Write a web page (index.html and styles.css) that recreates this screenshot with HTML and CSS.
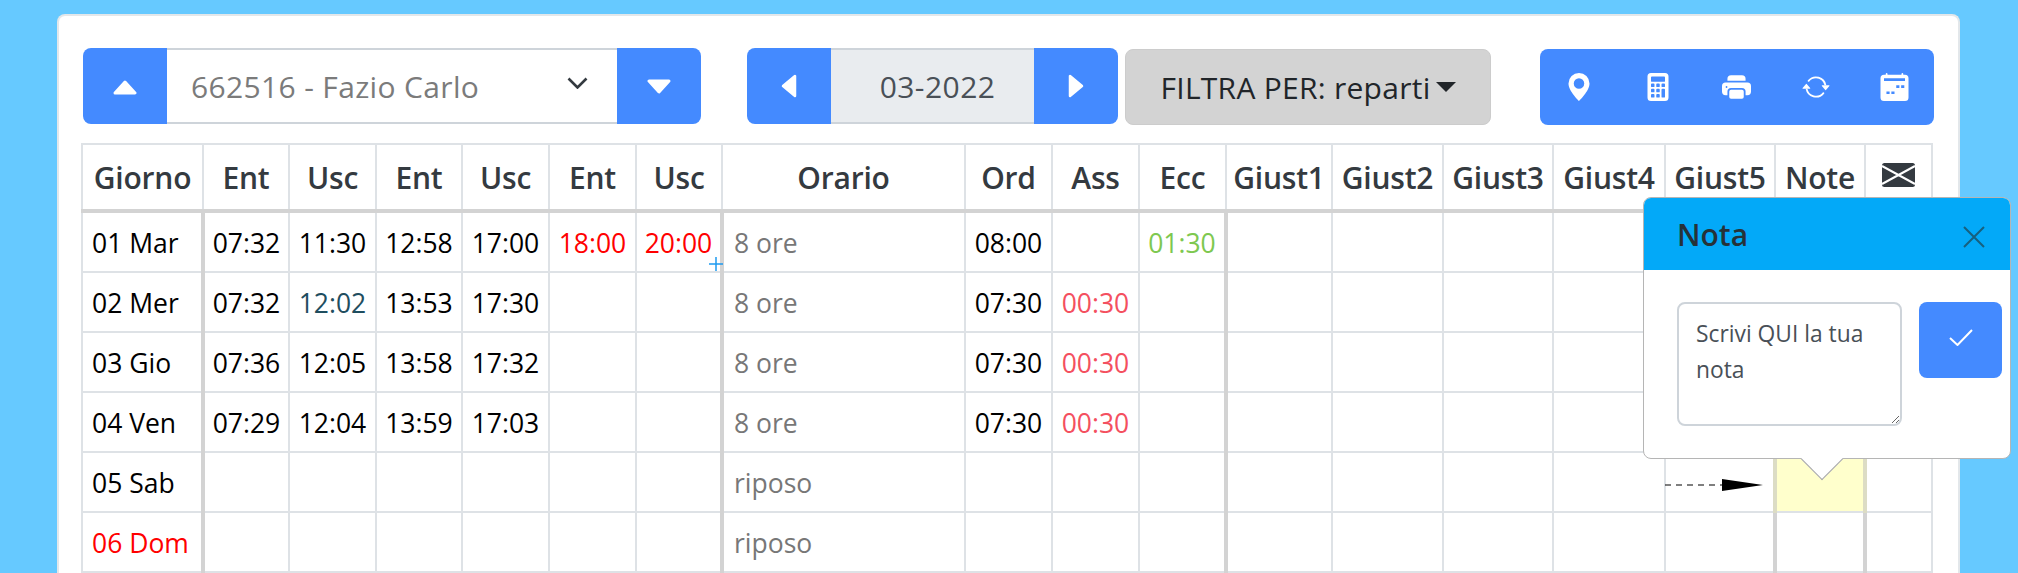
FILE: index.html
```html
<!DOCTYPE html>
<html lang="it">
<head>
<meta charset="utf-8">
<title>Cartellino</title>
<link rel="stylesheet" href="styles.css">
</head>
<body>
<div class="page">
  <main class="card">
    <div class="toolbar">
      <div class="group emp">
        <button class="btn side"><svg class="tri-h tri-up" viewBox="0 0 24 15"><path d="M12 2 22 13H2Z" fill="#fff" stroke="#fff" stroke-width="3" stroke-linejoin="round"/></svg></button>
        <div class="select"><span>662516 - Fazio Carlo</span><svg class="chev" viewBox="0 0 21 12"><path d="M1.5 1.5 10.5 10.5 19.5 1.5" fill="none" stroke="#343a40" stroke-width="2.6"/></svg></div>
        <button class="btn side"><svg class="tri-h" viewBox="0 0 24 15"><path d="M2 2H22L12 13Z" fill="#fff" stroke="#fff" stroke-width="3" stroke-linejoin="round"/></svg></button>
      </div>
      <div class="group month">
        <button class="btn side"><svg class="tri-v" viewBox="0 0 16 24"><path d="M14 2V22L2 12Z" fill="#fff" stroke="#fff" stroke-width="2.5" stroke-linejoin="round"/></svg></button>
        <div class="period">03-2022</div>
        <button class="btn side"><svg class="tri-v" viewBox="0 0 16 24"><path d="M2 2V22L14 12Z" fill="#fff" stroke="#fff" stroke-width="2.5" stroke-linejoin="round"/></svg></button>
      </div>
      <button class="filter">FILTRA PER: reparti<span class="caret"></span></button>
      <div class="tools">
        <button class="tool"><svg class="i-pin" viewBox="2 0 12 16"><path fill="#fff" d="M8 16s6-5.686 6-10A6 6 0 0 0 2 6c0 4.314 6 10 6 10zm0-7a3 3 0 1 1 0-6 3 3 0 0 1 0 6z"/></svg></button>
        <button class="tool"><svg class="i-pin" viewBox="2 0 12 16"><path fill="#fff" d="M2 2a2 2 0 0 1 2-2h8a2 2 0 0 1 2 2v12a2 2 0 0 1-2 2H4a2 2 0 0 1-2-2V2zm2 .5v2a.5.5 0 0 0 .5.5h7a.5.5 0 0 0 .5-.5v-2a.5.5 0 0 0-.5-.5h-7a.5.5 0 0 0-.5.5zm0 4v1a.5.5 0 0 0 .5.5h1a.5.5 0 0 0 .5-.5v-1a.5.5 0 0 0-.5-.5h-1a.5.5 0 0 0-.5.5zM4.500 9a.5.5 0 0 0-.5.5v1a.5.5 0 0 0 .5.5h1a.5.5 0 0 0 .5-.5v-1a.5.5 0 0 0-.5-.5h-1zM4 12.500v1a.5.5 0 0 0 .5.5h1a.5.5 0 0 0 .5-.5v-1a.5.5 0 0 0-.5-.5h-1a.5.5 0 0 0-.5.5zM7.500 6a.5.5 0 0 0-.5.5v1a.5.5 0 0 0 .5.5h1a.5.5 0 0 0 .5-.5v-1a.5.5 0 0 0-.5-.5h-1zM7 9.500v1a.5.5 0 0 0 .5.5h1a.5.5 0 0 0 .5-.5v-1a.5.5 0 0 0-.5-.5h-1a.5.5 0 0 0-.5.5zm.5 2.500a.5.5 0 0 0-.5.5v1a.5.5 0 0 0 .5.5h1a.5.5 0 0 0 .5-.5v-1a.5.5 0 0 0-.5-.5h-1zM10 6.500v1a.5.5 0 0 0 .5.5h1a.5.5 0 0 0 .5-.5v-1a.5.5 0 0 0-.5-.5h-1a.5.5 0 0 0-.5.5zm.5 2.500a.5.5 0 0 0-.5.5v4a.5.5 0 0 0 .5.5h1a.5.5 0 0 0 .5-.5v-4a.5.5 0 0 0-.5-.5h-1z"/></svg></button>
        <button class="tool"><svg class="i-print" viewBox="0 1 16 13"><path fill="#fff" d="M5 1a2 2 0 0 0-2 2v1h10V3a2 2 0 0 0-2-2H5zm6 8H5a1 1 0 0 0-1 1v3a1 1 0 0 0 1 1h6a1 1 0 0 0 1-1v-3a1 1 0 0 0-1-1z"/><path fill="#fff" d="M0 7a2 2 0 0 1 2-2h12a2 2 0 0 1 2 2v3a2 2 0 0 1-2 2h-1v-2a2 2 0 0 0-2-2H5a2 2 0 0 0-2 2v2H2a2 2 0 0 1-2-2V7zm2.500 1a.5.5 0 1 0 0-1 .5.5 0 0 0 0 1z"/></svg></button>
        <button class="tool"><svg class="i-sync" viewBox="0 2 16 12"><path fill="#fff" d="M11.534 7h3.932a.25.25 0 0 1 .192.41l-1.966 2.36a.25.25 0 0 1-.384 0l-1.966-2.36a.25.25 0 0 1 .192-.41zm-11 2h3.932a.25.25 0 0 0 .192-.41L2.692 6.23a.25.25 0 0 0-.384 0L.342 8.59A.25.25 0 0 0 .534 9z"/><path fill="#fff" d="M8 3c-1.552 0-2.94.707-3.857 1.818a.5.5 0 1 1-.771-.636A6.002 6.002 0 0 1 13.917 7H12.900A5.002 5.002 0 0 0 8 3zM3.100 9a5.002 5.002 0 0 0 8.757 2.182.5.5 0 1 1 .771.636A6.002 6.002 0 0 1 2.083 9H3.100z"/></svg></button>
        <button class="tool"><svg class="i-cal" viewBox="0 0 16 16"><path fill="#fff" d="M3.500 0a.5.5 0 0 1 .5.5V1h8V.5a.5.5 0 0 1 1 0V1h1a2 2 0 0 1 2 2v11a2 2 0 0 1-2 2H2a2 2 0 0 1-2-2V3a2 2 0 0 1 2-2h1V.5a.5.5 0 0 1 .5-.5z"/><path fill="#448aff" d="M2 3h12v1.500H2zM9 7h1.800v1.500H9zM11.800 7h1.800v1.500h-1.800zM3.400 10.500h1.800V12H3.400zM6.200 10.500H8V12H6.200z"/></svg></button>
      </div>
    </div>

    <table class="grid">
      <colgroup>
        <col class="c-day"><col class="c-ts"><col class="c-t"><col class="c-ts"><col class="c-t"><col class="c-t"><col class="c-ts">
        <col class="c-or"><col class="c-t"><col class="c-t"><col class="c-t">
        <col class="c-g1"><col class="c-g2"><col class="c-g3"><col class="c-g4"><col class="c-g3"><col class="c-n"><col class="c-m">
      </colgroup>
      <thead>
        <tr>
          <th>Giorno</th><th>Ent</th><th>Usc</th><th>Ent</th><th>Usc</th><th>Ent</th><th>Usc</th>
          <th>Orario</th><th>Ord</th><th>Ass</th><th>Ecc</th>
          <th>Giust1</th><th>Giust2</th><th>Giust3</th><th>Giust4</th><th>Giust5</th><th>Note</th>
          <th><svg class="mail" viewBox="0 0 33 24"><rect width="33" height="24" rx="2.500" fill="#343a40"/><path d="M0 3 16.500 12 33 3M0 21 16.500 12 33 21" fill="none" stroke="#fff" stroke-width="2"/></svg></th>
        </tr>
      </thead>
      <tbody>
        <tr>
          <td class="day">01 Mar</td><td class="s">07:32</td><td>11:30</td><td>12:58</td><td>17:00</td><td class="red">18:00</td><td class="red">20:00</td>
          <td class="or s">8 ore</td><td>08:00</td><td></td><td class="green">01:30</td>
          <td class="s"></td><td></td><td></td><td></td><td></td><td class="note"></td><td></td>
        </tr>
        <tr>
          <td class="day">02 Mer</td><td class="s">07:32</td><td class="teal">12:02</td><td>13:53</td><td>17:30</td><td></td><td></td>
          <td class="or s">8 ore</td><td>07:30</td><td class="ass">00:30</td><td></td>
          <td class="s"></td><td></td><td></td><td></td><td></td><td class="note"></td><td></td>
        </tr>
        <tr>
          <td class="day">03 Gio</td><td class="s">07:36</td><td>12:05</td><td>13:58</td><td>17:32</td><td></td><td></td>
          <td class="or s">8 ore</td><td>07:30</td><td class="ass">00:30</td><td></td>
          <td class="s"></td><td></td><td></td><td></td><td></td><td class="note"></td><td></td>
        </tr>
        <tr>
          <td class="day">04 Ven</td><td class="s">07:29</td><td>12:04</td><td>13:59</td><td>17:03</td><td></td><td></td>
          <td class="or s">8 ore</td><td>07:30</td><td class="ass">00:30</td><td></td>
          <td class="s"></td><td></td><td></td><td></td><td></td><td class="note"></td><td></td>
        </tr>
        <tr>
          <td class="day">05 Sab</td><td class="s"></td><td></td><td></td><td></td><td></td><td></td>
          <td class="or s">riposo</td><td></td><td></td><td></td>
          <td class="s"></td><td></td><td></td><td></td><td class="pre"></td><td class="sel"></td><td></td>
        </tr>
        <tr>
          <td class="day red">06 Dom</td><td class="s"></td><td></td><td></td><td></td><td></td><td></td>
          <td class="or s">riposo</td><td></td><td></td><td></td>
          <td class="s"></td><td></td><td></td><td></td><td></td><td class="note"></td><td></td>
        </tr>
      </tbody>
    </table>
  </main>

  <svg class="plus" viewBox="0 0 14 14"><path d="M7 0V14M0 7H14" stroke="#1e9bf0" stroke-width="1.500"/></svg>

  <svg class="pointer" viewBox="0 0 98 14"><path d="M0 7H58" stroke="#000" stroke-width="1.200" stroke-dasharray="6 5"/><path d="M57 1 98 7 57 13Z" fill="#000"/></svg>

  <aside class="popover">
    <header class="pop-head">
      <h3>Nota</h3>
      <svg class="close" viewBox="0 0 22 22"><path d="M1 1 21 21M21 1 1 21" stroke="#17607f" stroke-width="2" fill="none"/></svg>
    </header>
    <div class="pop-body">
      <textarea class="note-input" placeholder="Scrivi QUI la tua nota"></textarea>
      <button class="confirm"><svg class="check" viewBox="0 0 24 17"><path d="M1 9 8.500 16 23 1" fill="none" stroke="#fff" stroke-width="2"/></svg></button>
    </div>
    <span class="pop-arrow"></span>
  </aside>
</div>
</body>
</html>
```
FILE: styles.css
```css
* { box-sizing: border-box; }
html, body { margin: 0; height: 573px; overflow: hidden; }
body {
  background: #66c9ff;
  font-family: "Open Sans", "Noto Sans", sans-serif;
  color: #000;
}
.page { position: relative; padding: 14px 58px 0 57px; height: 573px; overflow: hidden; }
.card {
  background: #fff;
  border: 2px solid #e3e7ea;
  border-bottom: 0;
  border-radius: 8px 8px 0 0;
  padding: 32px 20px 0 22px;
  height: 559px;
}
button { border: 0; padding: 0; font: inherit; cursor: pointer; }
svg { display: block; }

/* toolbar */
.toolbar { display: flex; align-items: flex-start; height: 77px; margin-bottom: 18px; padding-left: 2px; }
.group { display: flex; height: 76px; border-radius: 8px; overflow: hidden; flex: none; }
.emp { width: 618px; }
.month { width: 371px; margin-left: 46px; }
.btn { background: #448aff; flex: none; display: flex; align-items: center; justify-content: center; }
.side { width: 84px; }
.tri-h { width: 24px; height: 15px; }
.tri-up { margin-top: 2px; }
.tri-v { width: 16px; height: 24px; }
.select {
  flex: 1; display: flex; align-items: center; justify-content: space-between;
  border-top: 2px solid #ced4da; border-bottom: 2px solid #ced4da;
  padding: 0 29px 0 24px;
  font-size: 30px; color: #7b7b7b; letter-spacing: 0.35px;
}
.chev { width: 21px; height: 12px; margin-top: -6px; }
.period {
  flex: 1; display: flex; align-items: center; justify-content: center;
  background: #e9ecef; border-top: 2px solid #ced4da; border-bottom: 2px solid #ced4da;
  padding-left: 10px;
  font-size: 30px; color: #495057; letter-spacing: 0.45px;
}
.filter {
  width: 366px; height: 76px; margin: 1px 0 0 7px; flex: none;
  background: #d3d3d3; border: 1px solid #ccc; border-radius: 8px;
  font-size: 30px; color: #212529; letter-spacing: 0.27px;
  display: flex; align-items: center; justify-content: center;
}
.caret { width: 0; height: 0; margin-left: 5px; border: 10px solid transparent; border-top-color: #212529; border-bottom: 0; }
.tools {
  width: 394px; height: 76px; margin: 1px 0 0 49px; flex: none;
  display: flex; background: #448aff; border-radius: 8px;
}
.tool { flex: 1; background: transparent; display: flex; align-items: center; justify-content: center; }
.i-pin { width: 22px; height: 28px; }
.i-print { width: 29px; height: 24px; }
.i-sync { width: 28px; height: 24px; }
.i-cal { width: 29px; height: 28px; }

/* table */
.grid {
  width: 1850px; table-layout: fixed; border-collapse: collapse;
  font-size: 26.500px;
}
.c-day { width: 121px; }
.c-t { width: 87px; }
.c-ts { width: 86px; }
.c-or { width: 243px; }
.c-g1 { width: 106px; }
.c-g2 { width: 111px; }
.c-g3 { width: 110px; }
.c-g4 { width: 112px; }
.c-n { width: 90px; }
.c-m { width: 67px; }
.grid th, .grid td { border: 2px solid #dee2e6; padding: 0; text-align: center; white-space: nowrap; }
.grid th { height: 67px; font-size: 30px; font-weight: 600; color: #343a40; border-bottom: 4px solid #d3d3d3; letter-spacing: -0.2px; }
.grid td { height: 60px; padding-top: 2px; }
.grid tbody tr:first-child td { height: 61px; }
.grid td.day { text-align: left; padding-left: 9px; border-right: 4px solid #d3d3d3; }
.grid td.s { border-left: 4px solid #d3d3d3; }
.grid td.or { text-align: left; padding-left: 10px; color: #777; border-right: 2px solid #dee2e6; }
.grid td.note { border-left: 4px solid #d3d3d3; border-right: 4px solid #d3d3d3; }
.grid td.sel { background: #ffc; border-left: 4px solid #dcdcc4; border-right: 4px solid #dcdcc4; }
.grid td.pre { border-right: 4px solid #dcdcc4; }
.red { color: #f00; }
.green { color: #7ec850; }
.ass { color: #f4505f; }
.teal { color: #1f4e5f; }
.mail { width: 33px; height: 24px; margin: -4px auto 0; }

/* overlays */
.plus { position: absolute; left: 709px; top: 257px; width: 14px; height: 14px; }
.pointer { position: absolute; left: 1665px; top: 478px; width: 98px; height: 14px; }
.popover {
  position: absolute; left: 1643px; top: 197px; width: 368px; height: 262px;
  background: #fff; border: 1px solid #b5b5b5; border-radius: 8px;
}
.pop-head {
  height: 72px; background: #03a9f8; border-radius: 7px 7px 0 0;
  display: flex; align-items: center; justify-content: space-between;
  padding: 0 25px 0 33px;
}
.pop-head h3 { margin: 0; font-size: 30px; font-weight: 600; color: #263238; }
.close { width: 22px; height: 22px; margin-top: 6px; }
.pop-body { display: flex; align-items: flex-start; gap: 17px; padding: 32px 8px 0 33px; }
.note-input {
  width: 225px; height: 124px; padding: 12px 17px;
  border: 2px solid #ced4da; border-radius: 8px;
  font: 22.800px/36px "Open Sans", sans-serif; color: #495057; outline: none;
}
.note-input::placeholder { color: #495057; opacity: 1; }
.confirm { width: 83px; height: 76px; background: #448aff; border-radius: 8px; display: flex; align-items: center; justify-content: center; }
.check { width: 24px; height: 17px; margin-top: -6px; }
.pop-arrow {
  position: absolute; left: 163px; top: 246px; width: 30px; height: 30px;
  background: #fff; border-right: 1px solid #a5a5a5; border-bottom: 1px solid #a5a5a5;
  transform: rotate(45deg);
}
```
